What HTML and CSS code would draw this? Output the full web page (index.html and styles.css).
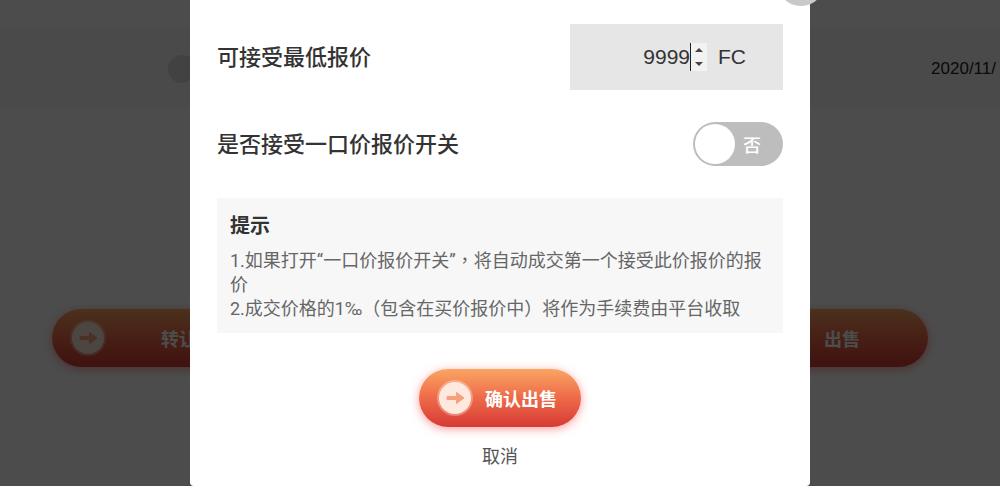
FILE: index.html
```html
<!DOCTYPE html>
<html lang="zh-CN">

<head>
    <meta charset="UTF-8">
    <meta name="viewport" content="width=device-width, initial-scale=1.0">
    <title>确认出售</title>
    <link rel="stylesheet" href="styles.css">
</head>

<body>
    <svg class="defs" width="0" height="0" aria-hidden="true">
        <symbol id="arrow" viewBox="0 0 36 36">
            <circle cx="18" cy="18" r="18" fill="#fff" opacity="0.3" />
            <circle cx="18" cy="18" r="16" fill="#ffe9df" />
            <path d="M10 16.5h9.5v-4l7.5 5.5-7.5 5.5v-4H10z" fill="#f7a07c" stroke="#f7a07c" stroke-linejoin="round" />
        </symbol>
    </svg>

    <main class="page">
        <div class="record">
            <span class="avatar"></span>
            <span class="date">2020/11/</span>
        </div>
        <div class="actions">
            <button class="btn btn-wide" type="button">
                <svg class="icon"><use href="#arrow" /></svg>
                转让
            </button>
            <button class="btn btn-wide" type="button">
                <svg class="icon"><use href="#arrow" /></svg>
                出售
            </button>
        </div>
    </main>

    <div class="overlay">
        <form class="modal">
            <button class="close" type="button" aria-label="关闭"></button>
            <div class="row">
                <label for="price">可接受最低报价</label>
                <div class="price">
                    <input id="price" type="number" value="9999">
                    <svg class="spinner" viewBox="0 0 16 28">
                        <rect width="16" height="28" fill="#f2f2f2" />
                        <path d="M4 9l4-4 4 4zM4 19l4 4 4-4z" fill="#444" />
                    </svg>
                    <span>FC</span>
                </div>
            </div>
            <div class="row">
                <label for="fixed">是否接受一口价报价开关</label>
                <div class="switch">
                    <input id="fixed" type="checkbox">
                    <span class="switch-text">否</span>
                </div>
            </div>
            <div class="tips">
                <h2>提示</h2>
                <p>1.如果打开“一口价报价开关”<span class="comma" lang="zh-TW">，</span>将自动成交第一个接受此价报价的报价</p>
                <p>2.成交价格的1‰（包含在买价报价中）将作为手续费由平台收取</p>
            </div>
            <div class="footer">
                <button class="btn" type="button">
                    <svg class="icon"><use href="#arrow" /></svg>
                    确认出售
                </button>
                <button class="cancel" type="button">取消</button>
            </div>
        </form>
    </div>
</body>

</html>
```

FILE: styles.css
```css
* {
    box-sizing: border-box;
}

body {
    margin: 0;
    overflow: hidden;
    background-color: #fff;
    color: #333;
    font-family: "Noto Sans CJK SC", sans-serif;
    font-size: 18px;
}

button,
input {
    font-family: inherit;
    border: none;
    margin: 0;
    padding: 0;
}

.defs {
    display: block;
}

/* Page behind the dialog */
.page {
    min-height: 100vh;
    padding-top: 27px;
    background-color: #fff;
}

.record {
    display: flex;
    justify-content: space-between;
    align-items: center;
    height: 80px;
    padding: 4px 4px 0 168px;
    background-color: #f9f9f9;
}

.avatar {
    width: 28px;
    height: 28px;
    border-radius: 50%;
    background-color: #dcdcdc;
}

.date {
    font-family: "Liberation Sans", sans-serif;
    font-size: 17px;
    color: #222;
}

.actions {
    display: flex;
    justify-content: space-between;
    margin-top: 202px;
    padding: 0 72px 0 52px;
}

.btn {
    display: flex;
    align-items: center;
    gap: 12px;
    height: 58px;
    padding: 0 24px 0 18px;
    border-radius: 29px;
    background: linear-gradient(#fba563, #ee6a48 50%, #d63a35);
    box-shadow: 0 2px 10px rgba(255, 60, 60, 0.5);
    color: #fff;
    font-size: 18px;
    font-weight: bold;
    line-height: 24px;
    white-space: nowrap;
    cursor: pointer;
}

.btn-wide {
    gap: 55px;
    padding-right: 68px;
}

.icon {
    flex: none;
    width: 36px;
    height: 36px;
}

/* Dialog */
.overlay {
    position: fixed;
    inset: 0;
    display: flex;
    justify-content: center;
    background-color: rgba(0, 0, 0, 0.7);
}

.modal {
    position: relative;
    width: 62%;
    padding: 24px 27px 18px;
    border-radius: 0 0 4px 4px;
    background-color: #fff;
}

.close {
    position: absolute;
    top: -42px;
    right: -15px;
    width: 48px;
    height: 48px;
    border-radius: 50%;
    background-color: #c9c9c9;
}

.row {
    display: flex;
    justify-content: space-between;
    align-items: center;
    margin-bottom: 32px;
}

.row label {
    padding-bottom: 4px;
    font-size: 22px;
    font-weight: 500;
    line-height: 32px;
}

.price {
    display: flex;
    align-items: center;
    width: 213px;
    height: 66px;
    padding-right: 37px;
    justify-content: flex-end;
    background-color: #e6e6e6;
    font-family: "Liberation Sans", sans-serif;
    font-size: 21px;
}

.price input {
    width: 100px;
    height: 28px;
    border-right: 1px solid #222;
    background: none;
    color: #333;
    font-size: 21px;
    text-align: right;
    outline: none;
    appearance: textfield;
}

.price input::-webkit-inner-spin-button {
    display: none;
}

.spinner {
    width: 16px;
    height: 28px;
    margin-right: 11px;
}

.switch {
    position: relative;
    display: flex;
}

.switch input {
    appearance: none;
    width: 90px;
    height: 44px;
    padding: 2px;
    border-radius: 22px;
    background-color: #bdbdbd;
    cursor: pointer;
}

.switch input::before {
    content: "";
    display: block;
    width: 40px;
    height: 40px;
    border-radius: 50%;
    background-color: #fff;
}

.switch-text {
    position: absolute;
    right: 22px;
    line-height: 44px;
    color: #fff;
    font-weight: 500;
    pointer-events: none;
}

.tips {
    padding: 15px 13px 12px;
    background-color: #f7f7f7;
    line-height: 24px;
}

.tips h2 {
    margin: 0 0 12px;
    font-size: 20px;
    font-weight: bold;
}

.tips p {
    margin: 0;
    color: #666;
    font-family: Roboto, "Noto Sans CJK SC", sans-serif;
}

.comma {
    font-family: "Noto Sans CJK TC", sans-serif;
    line-height: 1;
}

.footer {
    display: flex;
    flex-direction: column;
    align-items: center;
    gap: 16px;
    margin-top: 36px;
}

.cancel {
    background: none;
    color: #555;
    font-size: 18px;
    line-height: 24px;
    cursor: pointer;
}
```
